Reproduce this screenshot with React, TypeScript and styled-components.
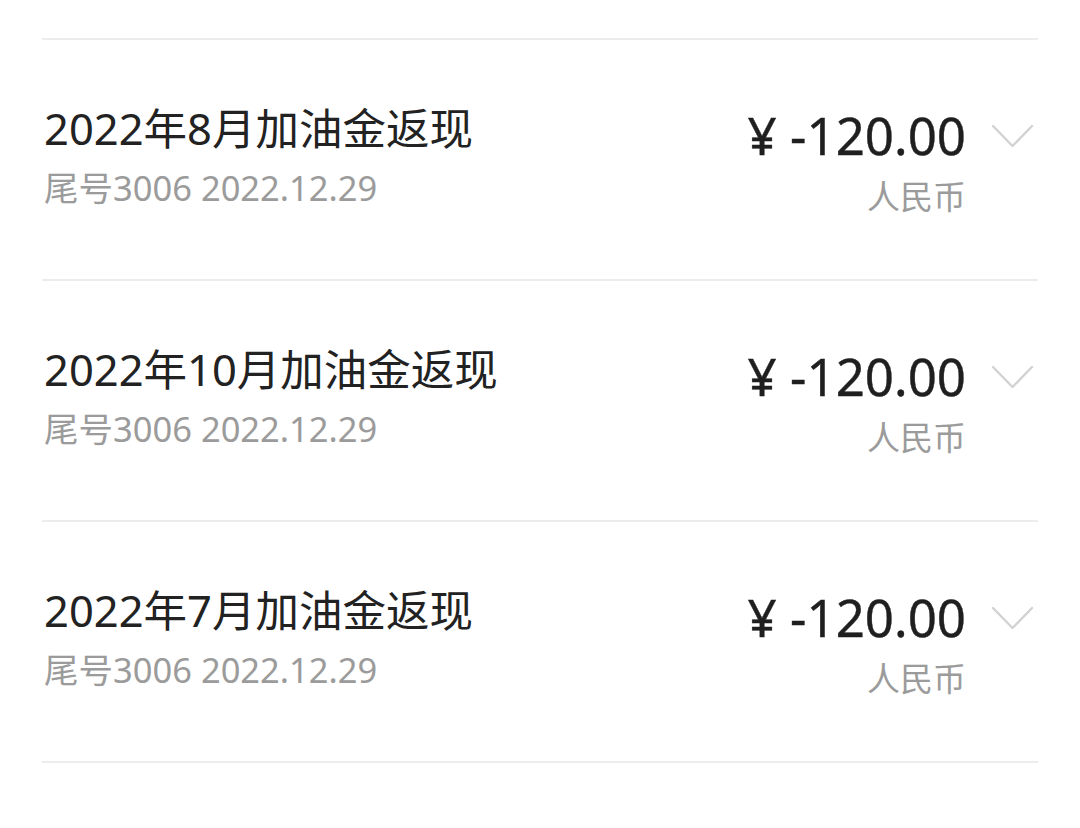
import React from "react";
import styled, { createGlobalStyle } from "styled-components";

const GlobalStyle = createGlobalStyle`
  html, body {
    margin: 0;
    padding: 0;
    background: #ffffff;
  }
  body {
    font-family: "Noto Sans", "Noto Sans CJK SC", sans-serif;
    -webkit-font-smoothing: antialiased;
  }
`;

const Page = styled.div`
  width: 1080px;
  height: 828px;
  overflow: hidden;
  background: #ffffff;
  padding: 38px 42px 0;
  box-sizing: border-box;
`;

const List = styled.ul`
  list-style: none;
  margin: 0;
  padding: 0;
  border-top: 2px solid #ececec;
`;

const Row = styled.li`
  display: flex;
  justify-content: space-between;
  align-items: flex-start;
  height: 241px;
  box-sizing: border-box;
  padding: 60px 2px 0 2px;
  border-bottom: 2px solid #ececec;
`;

const Left = styled.div`
  display: flex;
  flex-direction: column;
`;

const Title = styled.div`
  font-size: 43.5px;
  line-height: 56px;
  color: #222222;
  white-space: nowrap;
`;

const Sub = styled.div`
  margin-top: 10px;
  font-size: 34.5px;
  line-height: 44px;
  color: #9b9b9b;
  white-space: nowrap;
`;

const Right = styled.div`
  display: flex;
  align-items: flex-start;
  gap: 24px;
  padding-top: 7px;
`;

const AmountBlock = styled.div`
  display: flex;
  flex-direction: column;
  align-items: flex-end;
`;

const Amount = styled.div`
  font-size: 51px;
  line-height: 56px;
  font-weight: 400;
  color: #1f1f1f;
  white-space: nowrap;
  -webkit-text-stroke: 0.4px #1f1f1f;
`;

const Currency = styled.div`
  margin-top: 12px;
  font-size: 33px;
  line-height: 44px;
  color: #9b9b9b;
`;

const Chevron = styled.svg`
  width: 46px;
  height: 56px;
  flex: none;
`;

const items = [
  { title: "2022年8月加油金返现" },
  { title: "2022年10月加油金返现" },
  { title: "2022年7月加油金返现" },
];

export default function App() {
  return (
    <>
      <GlobalStyle />
      <Page>
        <List>
          {items.map((it) => (
            <Row key={it.title}>
              <Left>
                <Title>{it.title}</Title>
                <Sub>尾号3006 2022.12.29</Sub>
              </Left>
              <Right>
                <AmountBlock>
                  <Amount>¥ -120.00</Amount>
                  <Currency>人民币</Currency>
                </AmountBlock>
                <Chevron viewBox="0 0 46 56">
                  <polyline
                    points="3,19 22.5,39 42,19"
                    fill="none"
                    stroke="#d2d2d2"
                    strokeWidth="2.4"
                    strokeLinecap="round"
                    strokeLinejoin="round"
                  />
                </Chevron>
              </Right>
            </Row>
          ))}
        </List>
      </Page>
    </>
  );
}
